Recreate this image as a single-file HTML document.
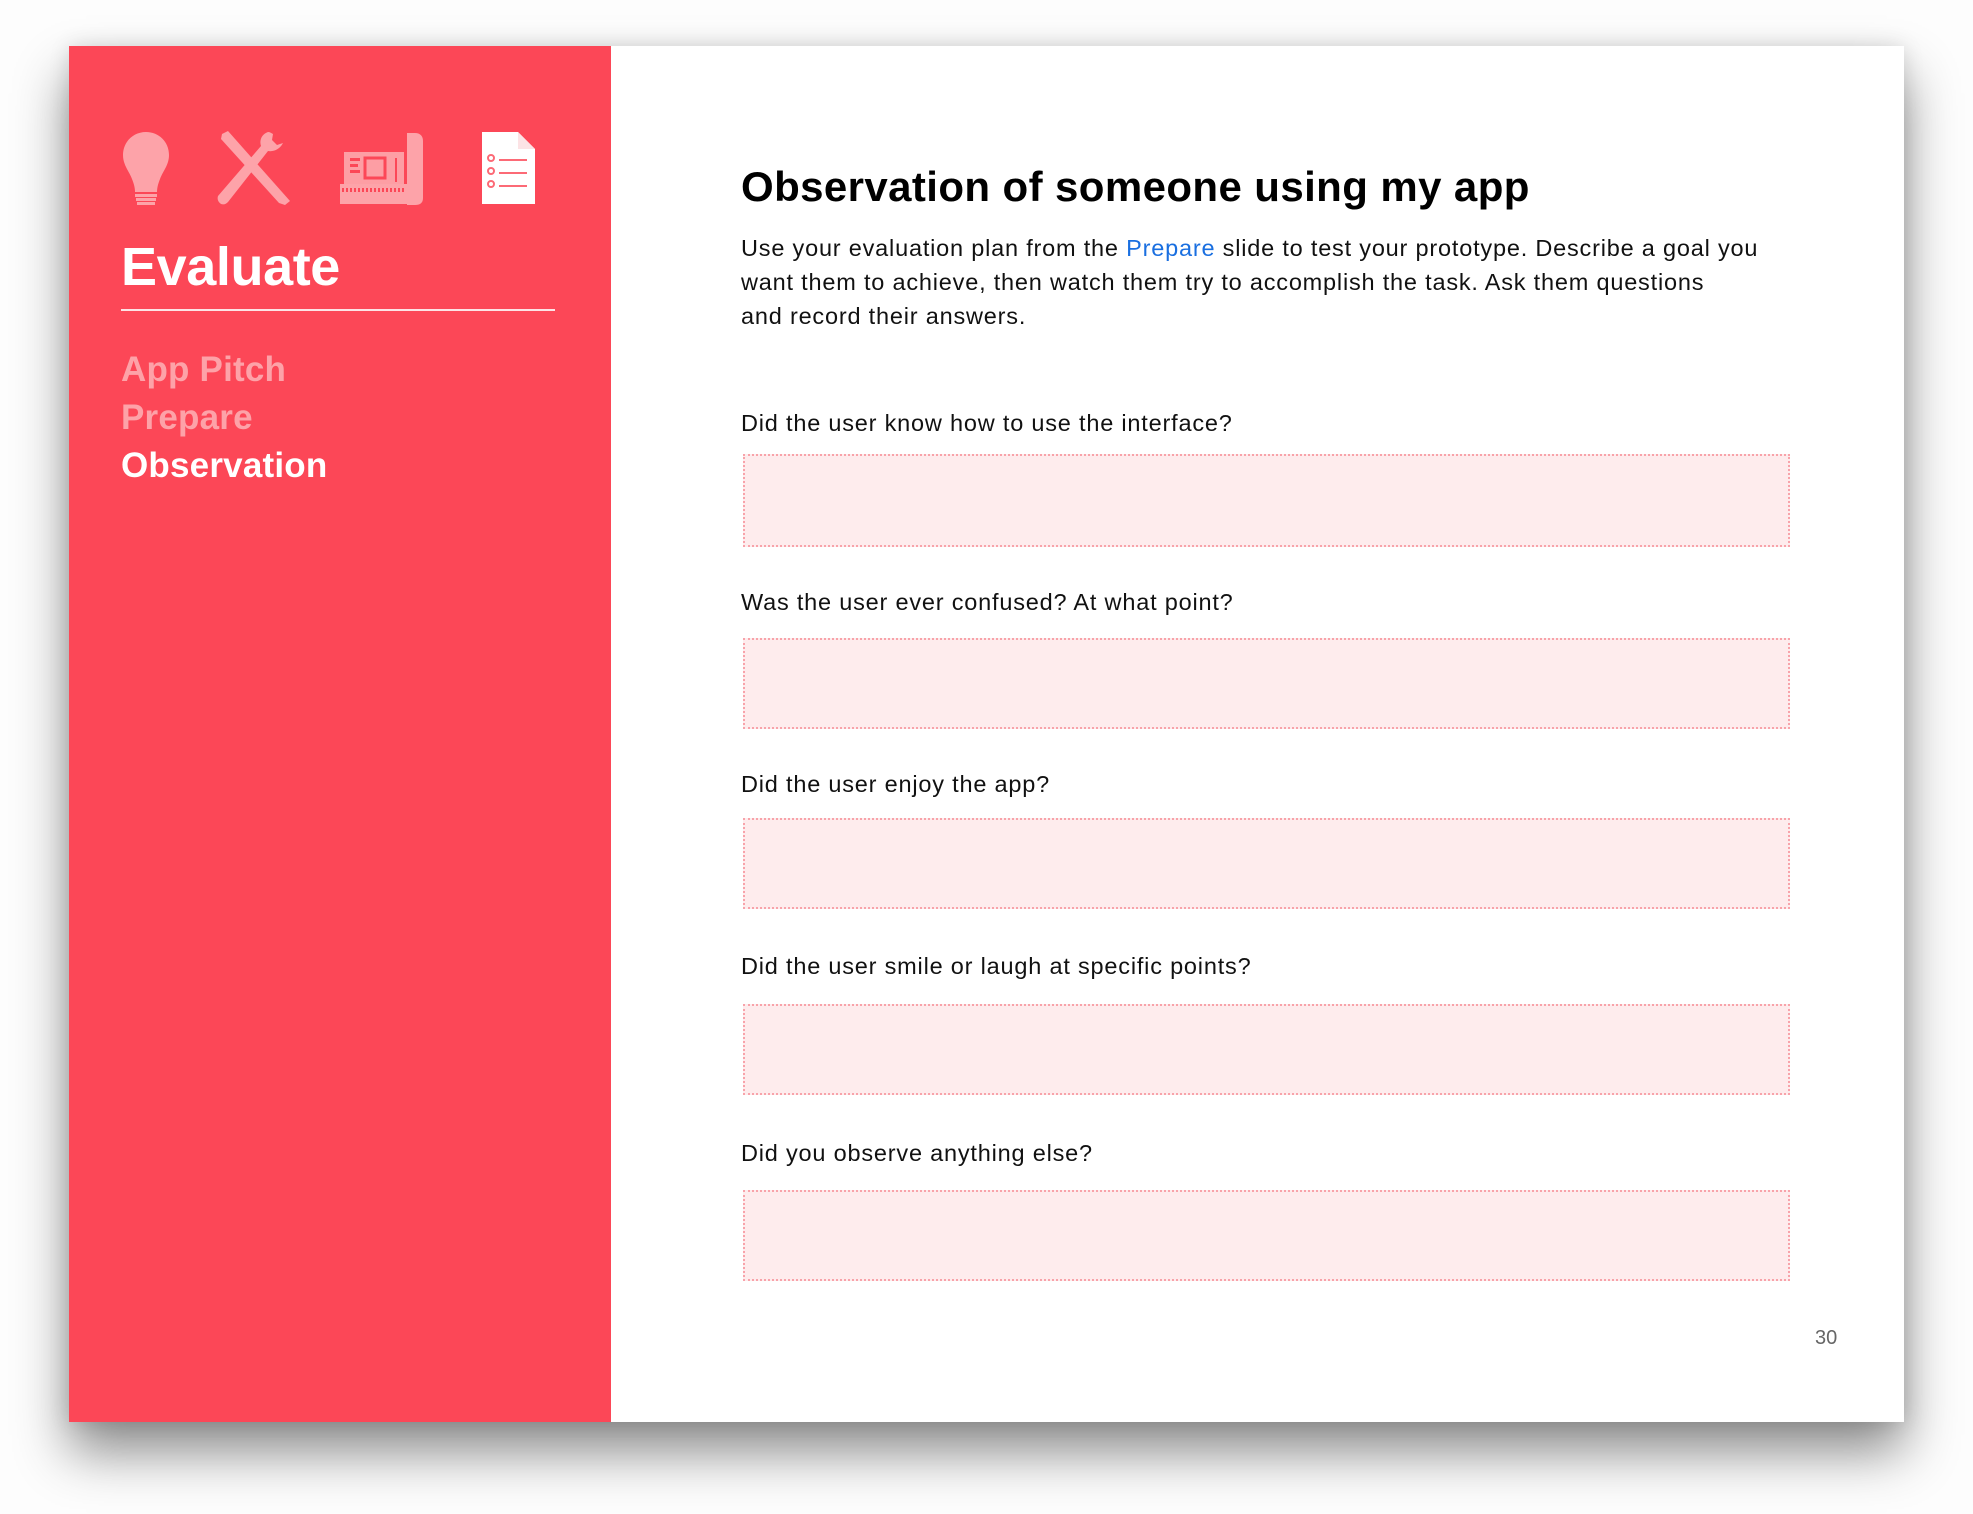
<!DOCTYPE html>
<html><head><meta charset="utf-8"><style>
html,body{margin:0;padding:0}
body{width:1973px;height:1514px;background:#fdfdfd;position:relative;overflow:hidden;font-family:"Liberation Sans",Arial,sans-serif}
.slide{position:absolute;left:69px;top:46px;width:1835px;height:1376px;background:#fff;box-shadow:0 30px 50px rgba(0,0,0,.45),0 0 20px rgba(0,0,0,.12)}
.red{position:absolute;left:69px;top:46px;width:542px;height:1376px;background:#fc4757}
.t{position:absolute;white-space:nowrap}
.box{position:absolute;left:743px;width:1047px;height:91px;background:#feeced;border:2px dotted #f8a3aa;box-sizing:border-box}
.q{position:absolute;left:741px;font-size:23.5px;color:#111;white-space:nowrap;letter-spacing:0.8px}
</style></head><body>
<div class="slide"></div>
<div class="red"></div>
<svg style="position:absolute;left:0;top:0" width="700" height="260">
 <g fill="#fda3a9">
  <path d="M146 132c-13 0-23 10-23 23 0 10 6 16 9 24 2 5 3 9 3 13h22c0-4 1-8 3-13 3-8 9-14 9-24 0-13-10-23-23-23z"/>
  <rect x="135" y="194" width="22" height="3"/><rect x="136" y="198" width="20" height="3"/><rect x="137" y="202" width="18" height="3"/>
  <path d="M222 134l6-3 62 70-5 4-6-2-58-64z"/>
  <path d="M268 132c-6 2-9 8-7 14l-43 50c-1 3 0 6 3 8 3 1 5 0 7-2l40-51c6 1 12-2 15-8l-6 2-5-5 1-6c-2-1-3-2-5-2z"/>
  <path d="M344 152h60v40h-60z" opacity=".95"/>
  <path d="M407 133h8c5 0 8 3 8 8v57c0 5-3 7-8 7h-8z"/>
  <rect x="340" y="184" width="68" height="20"/>
 </g>
 <g fill="#fc4757">
  <rect x="365" y="158" width="20" height="20" fill="none" stroke="#fc4757" stroke-width="3"/>
  <rect x="350" y="158" width="10" height="3"/><rect x="350" y="164" width="8" height="3"/><rect x="350" y="170" width="10" height="3"/>
  <rect x="395" y="158" width="2" height="24"/>
  <path d="M342 190h64" stroke="#fc4757" stroke-width="4" stroke-dasharray="2 2"/>
 </g>
 <path d="M482 132h36l17 17v55h-53z" fill="#fff"/>
 <path d="M518 132v17h17" fill="#fce3e5"/>
 <g stroke="#fc6a76" stroke-width="2" fill="none">
  <circle cx="491" cy="158" r="3"/><circle cx="491" cy="171" r="3"/><circle cx="491" cy="184" r="3"/>
  <path d="M499 160h28M499 173h28M499 186h28"/>
 </g>
</svg>
<div class="t" style="left:121px;top:236px;font-size:54px;font-weight:bold;color:#fff;letter-spacing:-0.4px">Evaluate</div>
<div style="position:absolute;left:121px;top:309px;width:434px;height:2px;background:#fde3e5"></div>
<div class="t" style="left:121px;top:346px;font-size:35px;font-weight:bold;color:#fda2a8;letter-spacing:0.2px;line-height:48px">App Pitch<br>Prepare<br><span style="color:#fff">Observation</span></div>
<div class="t" style="left:741px;top:163px;font-size:42px;font-weight:bold;color:#000;letter-spacing:0.4px">Observation of someone using my app</div>
<div style="position:absolute;left:741px;top:231px;width:1140px;font-size:23.5px;line-height:34px;color:#111;letter-spacing:0.8px;white-space:nowrap">Use your evaluation plan from the <span style="color:#1a6fe0">Prepare</span> slide to test your prototype. Describe a goal you<br>want them to achieve, then watch them try to accomplish the task. Ask them questions<br>and record their answers.</div>
<div class="q" style="top:410px">Did the user know how to use the interface?</div>
<div class="box" style="top:454px;height:93px"></div>
<div class="q" style="top:589px">Was the user ever confused? At what point?</div>
<div class="box" style="top:638px"></div>
<div class="q" style="top:771px">Did the user enjoy the app?</div>
<div class="box" style="top:818px"></div>
<div class="q" style="top:953px">Did the user smile or laugh at specific points?</div>
<div class="box" style="top:1004px"></div>
<div class="q" style="top:1140px">Did you observe anything else?</div>
<div class="box" style="top:1190px"></div>
<div class="t" style="left:1815px;top:1327px;font-size:20px;color:#666">30</div>
</body></html>
